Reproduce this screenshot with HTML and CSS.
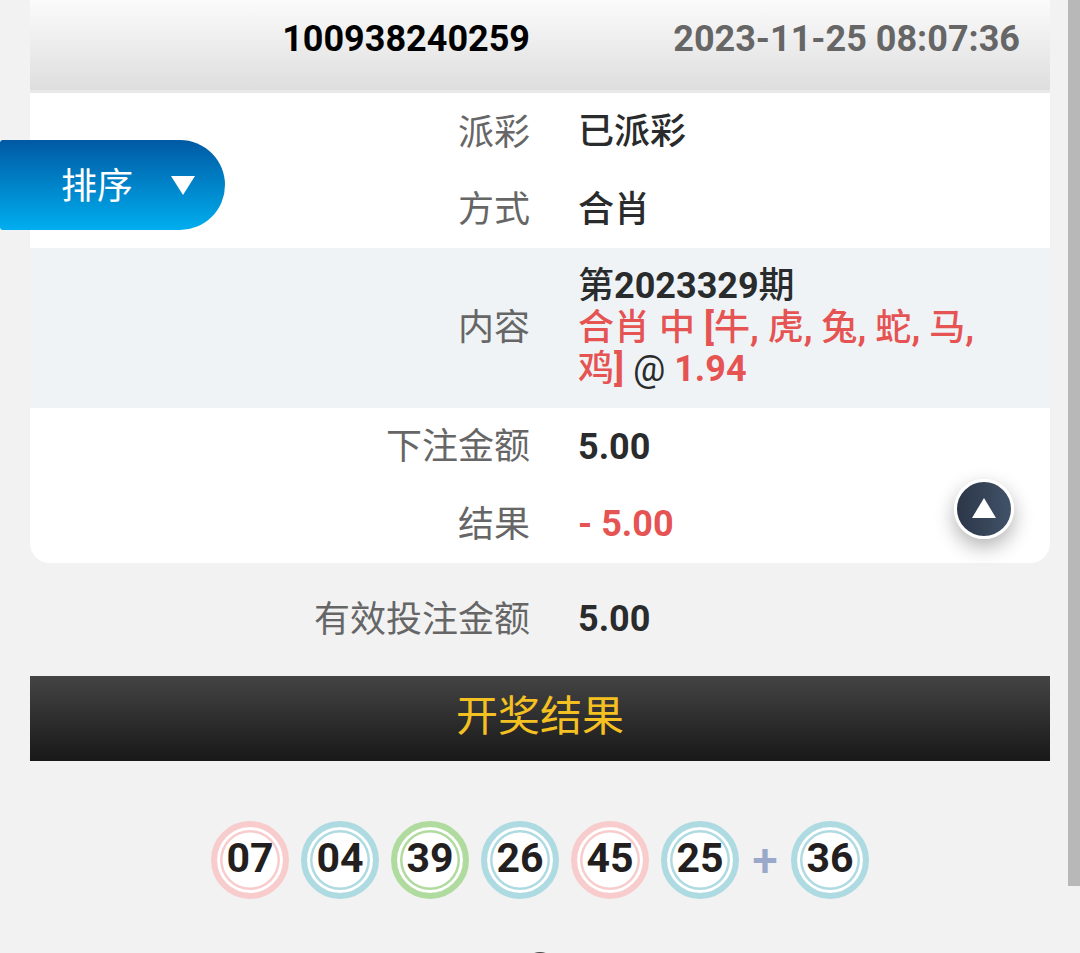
FILE: index.html
```html
<!DOCTYPE html>
<html lang="zh-CN">
<head>
    <meta charset="UTF-8">
    <meta name="viewport" content="width=device-width, initial-scale=1.0">
    <title>投注详情</title>
    <link rel="stylesheet" href="styles.css">
</head>
<body>
    <div class="page">
        <div class="card">
            <div class="card-head">
                <span class="bet-id">100938240259</span>
                <span class="bet-time">2023-11-25 08:07:36</span>
            </div>
            <div class="row">
                <div class="label">派彩</div>
                <div class="value"><span class="cjk">已派彩</span></div>
            </div>
            <div class="row">
                <div class="label">方式</div>
                <div class="value"><span class="cjk">合肖</span></div>
            </div>
            <div class="row row-alt">
                <div class="label">内容</div>
                <div class="value">
                    <span class="cjk">第</span>2023329<span class="cjk">期</span><br>
                    <span class="red"><span class="cjk">合肖 中</span> [<span class="cjk">牛</span>, <span class="cjk">虎</span>, <span class="cjk">兔</span>, <span class="cjk">蛇</span>, <span class="cjk">马</span>, <span class="cjk">鸡</span>]</span> <span class="at">@</span> <span class="red">1.94</span>
                </div>
            </div>
            <div class="row">
                <div class="label">下注金额</div>
                <div class="value">5.00</div>
            </div>
            <div class="row">
                <div class="label">结果</div>
                <div class="value red">- 5.00</div>
            </div>
        </div>

        <div class="row row-plain">
            <div class="label">有效投注金额</div>
            <div class="value">5.00</div>
        </div>

        <div class="result-title">开奖结果</div>

        <div class="balls">
            <span class="ball ball-red">07</span>
            <span class="ball ball-blue">04</span>
            <span class="ball ball-green">39</span>
            <span class="ball ball-blue">26</span>
            <span class="ball ball-red">45</span>
            <span class="ball ball-blue">25</span>
            <span class="plus">+</span>
            <span class="ball ball-blue">36</span>
        </div>

        <div class="next-hint"></div>
    </div>

    <div class="sort-tab">
        <span>排序</span>
        <i class="sort-arrow"></i>
    </div>
    <div class="to-top"><i class="to-top-arrow"></i></div>
    <div class="scrollbar"></div>
</body>
</html>
```

FILE: styles.css
```css
html, body {
    margin: 0;
    height: 953px;
    overflow: hidden;
}
body {
    position: relative;
    background: #f2f2f2;
    font-family: Roboto, "Noto Sans CJK SC", sans-serif;
    font-size: 36px;
    color: #292b2c;
}
.page {
    padding: 0 30px;
}
.card {
    background: #fff;
    border-radius: 0 0 20px 20px;
    overflow: hidden;
}
.card-head {
    display: grid;
    grid-template-columns: 500px 1fr;
    align-items: center;
    box-sizing: border-box;
    height: 93px;
    padding: 0 30px 13px 0;
    background: linear-gradient(#fbfbfb, #dedede);
    border-bottom: 3px solid #e9e9e9;
    font-size: 36px;
    font-weight: 700;
}
.bet-id {
    text-align: right;
    color: #000;
}
.bet-time {
    text-align: right;
    color: #666;
}
.row {
    display: grid;
    grid-template-columns: 500px 1fr;
    column-gap: 48px;
    align-items: center;
    min-height: 77.5px;
    line-height: 41.5px;
}
.row-alt {
    background: #eff3f6;
    padding: 16px 0 17px;
    box-sizing: border-box;
}
.row-plain {
    height: 113px;
}
.label {
    padding-top: 3px;
    text-align: right;
    color: #666;
}
.value {
    padding: 2px 70px 0 0;
    font-weight: 700;
}
.cjk {
    font-weight: 500;
}
.at {
    font-weight: 400;
}
.red {
    color: #e55353;
}
.result-title {
    height: 85px;
    line-height: 82px;
    text-align: center;
    background: linear-gradient(#444, #181818);
    color: #f5c021;
    font-size: 42px;
}
.balls {
    display: flex;
    justify-content: center;
    align-items: center;
    gap: 12px;
    margin-top: 60px;
}
.ball {
    box-sizing: border-box;
    width: 78px;
    height: 78px;
    border-radius: 50%;
    border: 6px solid var(--ball);
    box-shadow: inset 0 0 0 3px #fff, inset 0 0 0 5.5px var(--ball);
    background: #fff;
    text-align: center;
    line-height: 62px;
    font-size: 41px;
    font-weight: 700;
    color: #231f20;
}
.ball-red { --ball: #f8cccc; }
.ball-blue { --ball: #aedae2; }
.ball-green { --ball: #b0db9f; }
.plus {
    width: 28px;
    text-align: center;
    line-height: 78px;
    font-size: 46px;
    font-weight: 500;
    color: #9aa9c9;
}
.next-hint {
    width: 32px;
    height: 32px;
    margin: 53px auto 0;
    border-radius: 50%;
    background: #444;
}
.sort-tab {
    position: absolute;
    left: 0;
    top: 140px;
    width: 225px;
    height: 90px;
    display: flex;
    align-items: center;
    gap: 38px;
    box-sizing: border-box;
    padding: 0 0 4px 61px;
    border-radius: 3px 45px 45px 3px;
    background: linear-gradient(#0059a3, #00aeef);
    color: #fff;
    font-size: 36px;
}
.sort-arrow {
    width: 0;
    height: 0;
    margin-top: 4px;
    border-left: 12px solid transparent;
    border-right: 12px solid transparent;
    border-top: 19px solid #fff;
}
.to-top {
    position: absolute;
    left: 954px;
    top: 479px;
    width: 60px;
    height: 60px;
    box-sizing: border-box;
    display: flex;
    align-items: center;
    justify-content: center;
    border: 3px solid #fff;
    border-radius: 50%;
    background: linear-gradient(to right, #2c3648, #415268);
    box-shadow: 0 8px 20px rgba(0,0,0,0.3);
}
.to-top-arrow {
    width: 0;
    height: 0;
    margin-top: -2px;
    border-left: 12px solid transparent;
    border-right: 12px solid transparent;
    border-bottom: 20px solid #fff;
}
.scrollbar {
    position: absolute;
    right: 0;
    top: 0;
    width: 12px;
    height: 886px;
    background: #b8b8b8;
}
```
